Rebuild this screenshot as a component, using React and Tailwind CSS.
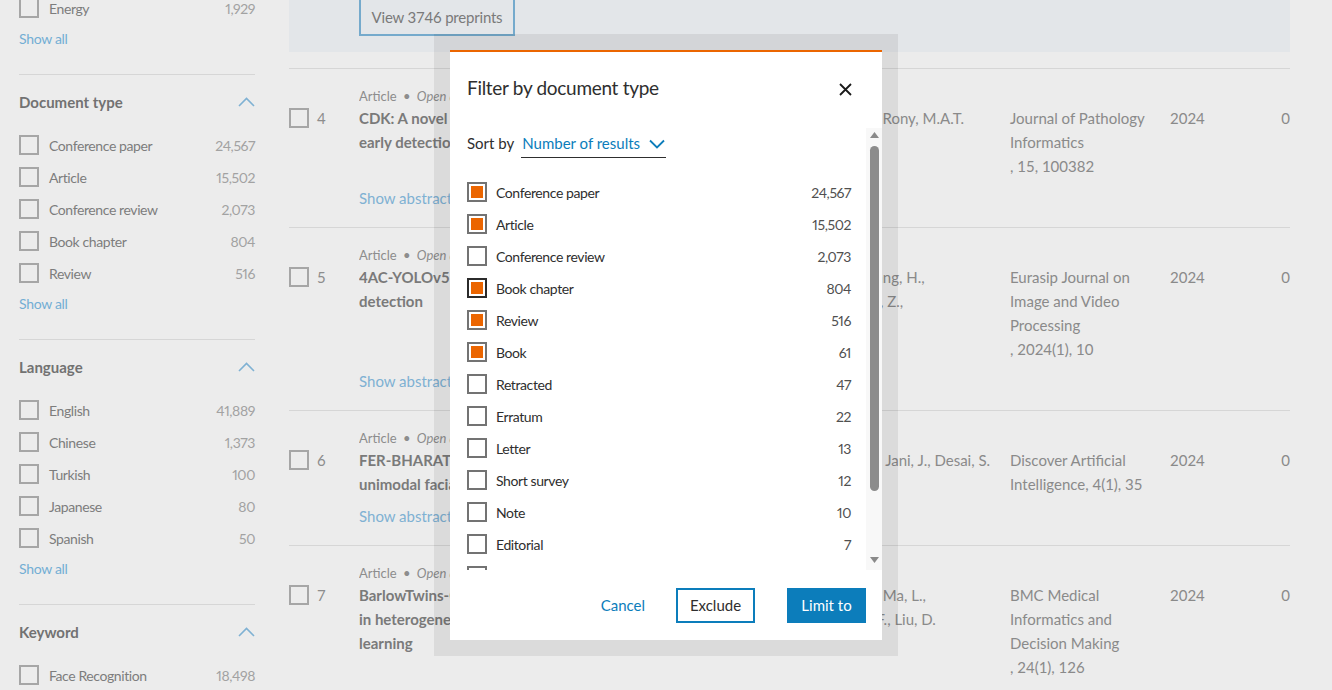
import React from "react";

const font = { fontFamily: "Lato, 'Noto Sans', sans-serif" };

const sidebar = [
  {
    title: "Document type",
    items: [
      ["Conference paper", "24,567"],
      ["Article", "15,502"],
      ["Conference review", "2,073"],
      ["Book chapter", "804"],
      ["Review", "516"],
    ],
  },
  {
    title: "Language",
    items: [
      ["English", "41,889"],
      ["Chinese", "1,373"],
      ["Turkish", "100"],
      ["Japanese", "80"],
      ["Spanish", "50"],
    ],
  },
];

const results = [
  {
    n: 4,
    title: ["CDK: A novel deep learning framework for facial expression", "early detection of autism spectrum disorder"],
    authors: ["Ali, Rony, M.A.T."],
    source: ["Journal of Pathology", "Informatics", ", 15, 100382"],
    abstract: true,
  },
  {
    n: 5,
    title: ["4AC-YOLOv5: an improved YOLOv5 model for face mask", "detection"],
    authors: ["Zhang, H.,", "...Li, Z.,"],
    source: ["Eurasip Journal on", "Image and Video", "Processing", ", 2024(1), 10"],
    abstract: true,
  },
  {
    n: 6,
    title: ["FER-BHARAT: a lightweight deep learning network for efficient", "unimodal facial emotion recognition in Indian context"],
    authors: ["Raj, Jani, J., Desai, S."],
    source: ["Discover Artificial", "Intelligence, 4(1), 35"],
    abstract: true,
  },
  {
    n: 7,
    title: ["BarlowTwins-CXR: enhancing chest X-ray abnormality localization", "in heterogeneous data with cross-domain self-supervised", "learning"],
    authors: ["Xu, Ma, L.,", "Li, F., Liu, D."],
    source: ["BMC Medical", "Informatics and", "Decision Making", ", 24(1), 126"],
    abstract: false,
  },
];

const docTypes = [
  ["Conference paper", "24,567", "on"],
  ["Article", "15,502", "on"],
  ["Conference review", "2,073", "off"],
  ["Book chapter", "804", "focus"],
  ["Review", "516", "on"],
  ["Book", "61", "on"],
  ["Retracted", "47", "off"],
  ["Erratum", "22", "off"],
  ["Letter", "13", "off"],
  ["Short survey", "12", "off"],
  ["Note", "10", "off"],
  ["Editorial", "7", "off"],
  ["Data paper", "3", "off"],
];

function ChevronUp() {
  return (
    <svg width="17" height="10" viewBox="0 0 17 10" fill="none">
      <polyline points="1,9 8.5,1.5 16,9" stroke="#7fb1d3" strokeWidth="1.6" />
    </svg>
  );
}

function SideRow({ label, count }) {
  return (
    <div className="flex h-8 items-center text-[14px] tracking-[-0.4px]">
      <span className="h-5 w-5 shrink-0 border-2 border-[#a6a6a6]" />
      <span className="ml-[10px] text-[#7d7d7d]">{label}</span>
      <span className="ml-auto proportional-nums text-[#a2a2a2]">{count}</span>
    </div>
  );
}

function Sidebar() {
  return (
    <aside className="w-[236px] shrink-0 ml-[19px]">
      <div className="-mt-[8px]">
        <SideRow label="Energy" count="1,929" />
        <div className="flex h-7 items-center text-[14px] tracking-[-0.3px] text-[#73aed4]">Show all</div>
      </div>
      <div className="h-[22px]" />
      {sidebar.map((s) => (
        <div key={s.title} className="border-t border-[#d6d6d6]">
          <div className="flex h-[54px] items-center justify-between">
            <span className="text-[15px] font-bold text-[#727272]">{s.title}</span>
            <ChevronUp />
          </div>
          {s.items.map(([l, c]) => (
            <SideRow key={l} label={l} count={c} />
          ))}
          <div className="flex h-7 items-center text-[14px] tracking-[-0.3px] text-[#73aed4]">Show all</div>
          <div className="h-[22px]" />
        </div>
      ))}
      <div className="border-t border-[#d6d6d6]">
        <div className="flex h-[54px] items-center justify-between">
          <span className="text-[15px] font-bold text-[#727272]">Keyword</span>
          <ChevronUp />
        </div>
        <SideRow label="Face Recognition" count="18,498" />
      </div>
    </aside>
  );
}

function ResultRow({ r }) {
  return (
    <div className="border-t border-[#d6d6d6] pt-[17px] pb-[17px] text-[15px]">
      <div className="flex">
        <div className="flex w-[70px] shrink-0 items-start pt-[22px]">
          <span className="h-5 w-5 border-2 border-[#a6a6a6]" />
          <span className="ml-[8px] -mt-[2px] leading-6 text-[#8d8d8d]">{r.n}</span>
        </div>
        <div className="w-[459px] shrink-0 overflow-hidden">
          <div className="h-5 text-[13px] leading-5 text-[#8d8d8d]">
            Article <span className="mx-[3px]">•</span> <span className="italic">Open access</span>
          </div>
          {r.title.map((t) => (
            <div key={t} className="whitespace-nowrap font-bold leading-6 text-[#7a7a7a]">{t}</div>
          ))}
        </div>
        <div className="ml-[40px] w-[132px] shrink-0 pt-5 text-[#8a8a8a]">
          {r.authors.map((a) => (
            <div key={a} className="whitespace-nowrap leading-6">{a}</div>
          ))}
        </div>
        <div className="ml-[20px] w-[140px] shrink-0 pt-5 text-[#8a8a8a]">
          {r.source.map((s) => (
            <div key={s} className="whitespace-nowrap leading-6">{s}</div>
          ))}
        </div>
        <div className="ml-[20px] w-[60px] shrink-0 pt-5 leading-6 text-[#8a8a8a]">2024</div>
        <div className="flex-1 pt-5 text-right leading-6 text-[#8a8a8a]">0</div>
      </div>
      {r.abstract && (
        <div className="ml-[70px] mt-2 leading-6 text-[#7fb1d3]">Show abstract</div>
      )}
    </div>
  );
}

function Check({ state }) {
  const border = state === "focus" ? "border-[#2b2b2b]" : "border-[#737373]";
  return (
    <span className={`flex h-5 w-5 shrink-0 items-center justify-center border-2 ${border} bg-white`}>
      {state !== "off" && <span className="h-3 w-3 bg-[#eb6500]" />}
    </span>
  );
}

function Modal() {
  return (
    <div className="absolute left-[434px] top-[34px] h-[622px] w-[464px] bg-black/[0.07] p-4" style={font}>
      <div className="flex h-full flex-col border-t-2 border-[#eb6500] bg-white">
        <div className="flex h-[76px] shrink-0 items-center justify-between pb-[3px] pl-[17px] pr-[30px]">
          <h2 className="text-[19px] tracking-[-0.3px] text-[#2e2e2e]">Filter by document type</h2>
          <svg className="mt-[1px]" width="13" height="13" viewBox="0 0 13 13">
            <path d="M1 1 L12 12 M12 1 L1 12" stroke="#1a1a1a" strokeWidth="1.8" />
          </svg>
        </div>
        <div className="relative h-[442px] shrink-0 overflow-hidden">
          <div className="pl-[17px] pr-[31px]">
            <div className="flex h-[30px] items-center text-[15px]">
              <span className="text-[#2e2e2e]">Sort by</span>
              <span className="ml-[7px] flex h-[30px] items-center gap-[9px] border-b border-[#2e2e2e] pl-[1px] pr-[1px] pt-[2px] text-[#0c7dbb]">
                Number of results
                <svg width="16" height="10" viewBox="0 0 16 10" fill="none">
                  <polyline points="1,1.5 8,8.5 15,1.5" stroke="#0c7dbb" strokeWidth="1.8" />
                </svg>
              </span>
            </div>
            <div className="mt-[18px]">
              {docTypes.map(([l, c, s]) => (
                <div key={l} className="flex h-8 items-center text-[14px] tracking-[-0.4px]">
                  <Check state={s} />
                  <span className="ml-[9px] text-[#2e2e2e]">{l}</span>
                  <span className="ml-auto proportional-nums text-[#505050]">{c}</span>
                </div>
              ))}
            </div>
          </div>
          <div className="absolute right-0 top-0 flex h-full w-[16px] flex-col items-center bg-[#f8f8f8]">
            <svg className="mt-[4px]" width="9" height="6" viewBox="0 0 9 6">
              <polygon points="0,6 4.5,0 9,6" fill="#8a8a8a" />
            </svg>
            <div className="mt-[8px] h-[345px] w-[9px] rounded-full bg-[#8c8c8c]" />
            <svg className="mt-auto mb-[7px]" width="9" height="6" viewBox="0 0 9 6">
              <polygon points="0,0 9,0 4.5,6" fill="#8a8a8a" />
            </svg>
          </div>
        </div>
        <div className="flex flex-1 items-start justify-end pr-4 pt-[18px] text-[15px]">
          <button className="mt-[6px] text-[#0c7dbb]">Cancel</button>
          <button className="ml-[31px] h-[35px] w-[79px] border-2 border-[#0c7dbb] text-[#2e2e2e]">Exclude</button>
          <button className="ml-[32px] h-[35px] w-[79px] bg-[#0c7dbb] text-white">Limit to</button>
        </div>
      </div>
    </div>
  );
}

export default function App() {
  return (
    <div className="relative h-[690px] w-[1332px] overflow-hidden bg-[#ececec]" style={font}>
      <div className="flex">
        <Sidebar />
        <main className="ml-[34px] w-[1001px] shrink-0">
          <div className="h-[52px] bg-[#e3e6e9] pl-[70px]">
            <button className="-mt-[2px] h-[38px] w-[156px] border-2 border-[#75aacc] text-[15px] tracking-[-0.2px] text-[#7a7a7a]">
              View 3746 preprints
            </button>
          </div>
          <div className="mt-4">
            {results.map((r) => (
              <ResultRow key={r.n} r={r} />
            ))}
          </div>
        </main>
      </div>
      <Modal />
    </div>
  );
}
